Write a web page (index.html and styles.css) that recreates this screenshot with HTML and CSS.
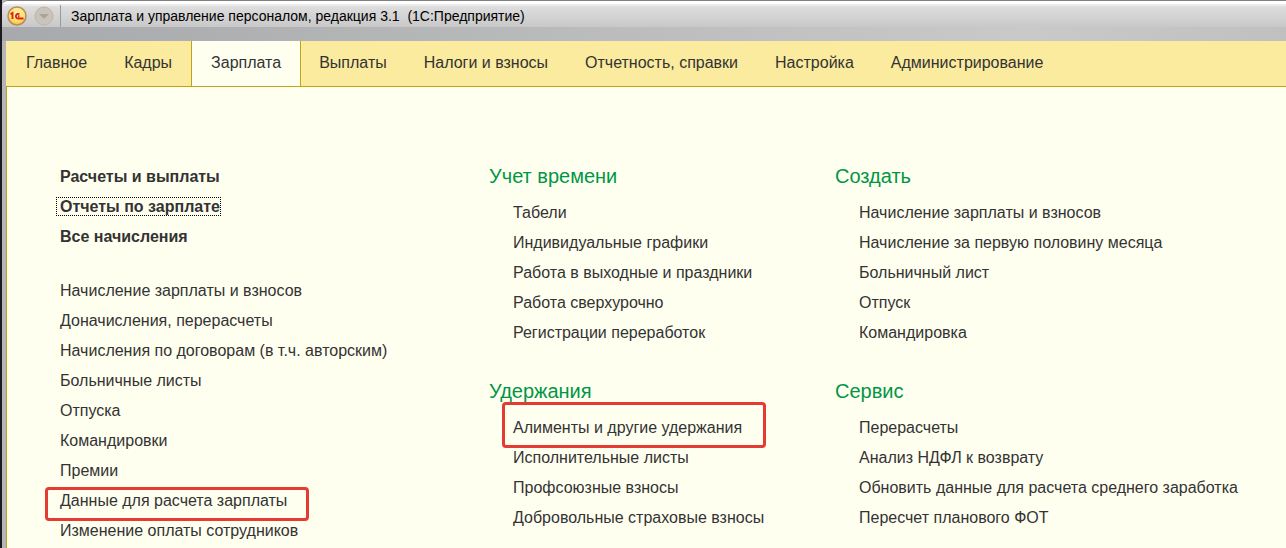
FILE: index.html
```html
<!DOCTYPE html>
<html lang="ru">
<head>
<meta charset="utf-8">
<title>Зарплата и управление персоналом</title>
<link rel="stylesheet" href="styles.css">
</head>
<body>
<header class="titlebar">
  <svg class="logo" viewBox="0 0 20 20" aria-hidden="true">
    <defs><radialGradient id="gold" cx="50%" cy="35%" r="65%"><stop offset="0" stop-color="#fff6b8"/><stop offset=".6" stop-color="#ffe568"/><stop offset="1" stop-color="#f4b942"/></radialGradient></defs>
    <circle cx="10" cy="10" r="9" fill="url(#gold)" stroke="#b98b62" stroke-width="1.500"/>
    <path d="M3.500 8.200l2-1.200v6M12.500 8.300a2.300 2.300 0 1 0-1.500 4.200h5.500M12.500 10.300h-1.500" fill="none" stroke="#e0201c" stroke-width="1.900"/>
  </svg>
  <button class="menu" aria-label="Меню"><svg viewBox="0 0 20 20"><circle cx="10" cy="10" r="9" fill="#c9c3ba" stroke="#bdb5ab"/><path d="M5 8h10l-5 5z" fill="#a8a49e"/></svg></button>
  <span class="divider"></span>
  <h1 class="title">Зарплата и управление персоналом, редакция 3.1&nbsp; (1С:Предприятие)</h1>
</header>
<nav class="tabs">
  <a class="tab" href="#">Главное</a><a class="tab" href="#">Кадры</a><a class="tab active" href="#">Зарплата</a><a class="tab" href="#">Выплаты</a><a class="tab" href="#">Налоги и взносы</a><a class="tab" href="#">Отчетность, справки</a><a class="tab" href="#">Настройка</a><a class="tab" href="#">Администрирование</a>
</nav>
<main class="content">
  <div class="column">
    <ul class="links strong">
      <li><a href="#">Расчеты и выплаты</a></li>
      <li><a class="focused" href="#">Отчеты по зарплате</a></li>
      <li><a href="#">Все начисления</a></li>
    </ul>
    <ul class="links">
      <li><a href="#">Начисление зарплаты и взносов</a></li>
      <li><a href="#">Доначисления, перерасчеты</a></li>
      <li><a href="#">Начисления по договорам (в т.ч. авторским)</a></li>
      <li><a href="#">Больничные листы</a></li>
      <li><a href="#">Отпуска</a></li>
      <li><a href="#">Командировки</a></li>
      <li><a href="#">Премии</a></li>
      <li class="marked"><a href="#">Данные для расчета зарплаты</a></li>
      <li><a href="#">Изменение оплаты сотрудников</a></li>
    </ul>
  </div>
  <div class="column">
    <section class="group">
      <h2>Учет времени</h2>
      <ul class="links">
        <li><a href="#">Табели</a></li>
        <li><a href="#">Индивидуальные графики</a></li>
        <li><a href="#">Работа в выходные и праздники</a></li>
        <li><a href="#">Работа сверхурочно</a></li>
        <li><a href="#">Регистрации переработок</a></li>
      </ul>
    </section>
    <section class="group">
      <h2>Удержания</h2>
      <ul class="links">
        <li class="marked tall"><a href="#">Алименты и другие удержания</a></li>
        <li><a href="#">Исполнительные листы</a></li>
        <li><a href="#">Профсоюзные взносы</a></li>
        <li><a href="#">Добровольные страховые взносы</a></li>
      </ul>
    </section>
  </div>
  <div class="column">
    <section class="group">
      <h2>Создать</h2>
      <ul class="links">
        <li><a href="#">Начисление зарплаты и взносов</a></li>
        <li><a href="#">Начисление за первую половину месяца</a></li>
        <li><a href="#">Больничный лист</a></li>
        <li><a href="#">Отпуск</a></li>
        <li><a href="#">Командировка</a></li>
      </ul>
    </section>
    <section class="group">
      <h2>Сервис</h2>
      <ul class="links">
        <li><a href="#">Перерасчеты</a></li>
        <li><a href="#">Анализ НДФЛ к возврату</a></li>
        <li><a href="#">Обновить данные для расчета среднего заработка</a></li>
        <li><a href="#">Пересчет планового ФОТ</a></li>
      </ul>
    </section>
  </div>
</main>
</body>
</html>
```
FILE: styles.css
```css
*, *::after { box-sizing: border-box; }
body { margin: 0; min-height: 100vh; overflow: hidden; display: flex; flex-direction: column; background: #b4b5b7; border-left: 2px solid #1c1a1c; color: #333; font: 16px/30px "Liberation Sans", Arial, sans-serif; }
a { color: inherit; text-decoration: none; }
ul { list-style: none; margin: 0; padding: 0; }
.titlebar { display: flex; align-items: center; height: 41px; padding: 0 5px 11px; border-top: 1px solid #808080; border-top-left-radius: 6px; background: linear-gradient(#fff 0 3px, #ececec 3px 5px, #dedede 5px, #c8c8c8 26px, transparent 26px), linear-gradient(90deg, #a8a9ac, #b4b5b7 30%, #c9c9c9 80%, #c0c0c0); }
.logo { width: 20px; height: 20px; }
.menu { width: 20px; height: 20px; margin-left: 7px; padding: 0; border: 0; background: none; }
.menu svg { display: block; }
.divider { width: 1px; height: 22px; margin: 0 10px 0 6px; background: #999; }
.title { margin: 0; font-size: 14px; font-weight: 400; line-height: 20px; color: #000; white-space: nowrap; }
.tabs { display: flex; height: 46px; margin-left: 4px; padding-left: 2px; background: #fbeb9e; border-bottom: 1px solid #bda516; }
.tab { padding: 7px 19px 0 18px; white-space: nowrap; }
.active { background: #fffff0; border: solid #bda516; border-width: 0 1px; padding-left: 19px; }
.content { flex: 1; display: grid; grid-template-columns: 429px 346px 1fr; margin-left: 4px; padding: 74px 0 0 53px; background: #fffff0; border-left: 1px solid #bda516; white-space: nowrap; }
.strong { font-weight: 700; margin: 1px 0 24px; }
.group { margin-bottom: 28px; }
.group .links { padding-left: 24px; }
h2 { margin: 0 0 7px; font-size: 20px; line-height: 30px; font-weight: 400; color: #009646; }
.links li { height: 30px; }
.focused { margin-left: -3px; padding-left: 3px; outline: 1px dotted #000; }
.marked { position: relative; }
.marked::after { content: ""; position: absolute; left: -15px; top: 1px; width: 264px; height: 34px; border: 3px solid #e53b32; border-radius: 4px; pointer-events: none; }
.tall::after { left: -11px; top: -11px; height: 46px; }
```
